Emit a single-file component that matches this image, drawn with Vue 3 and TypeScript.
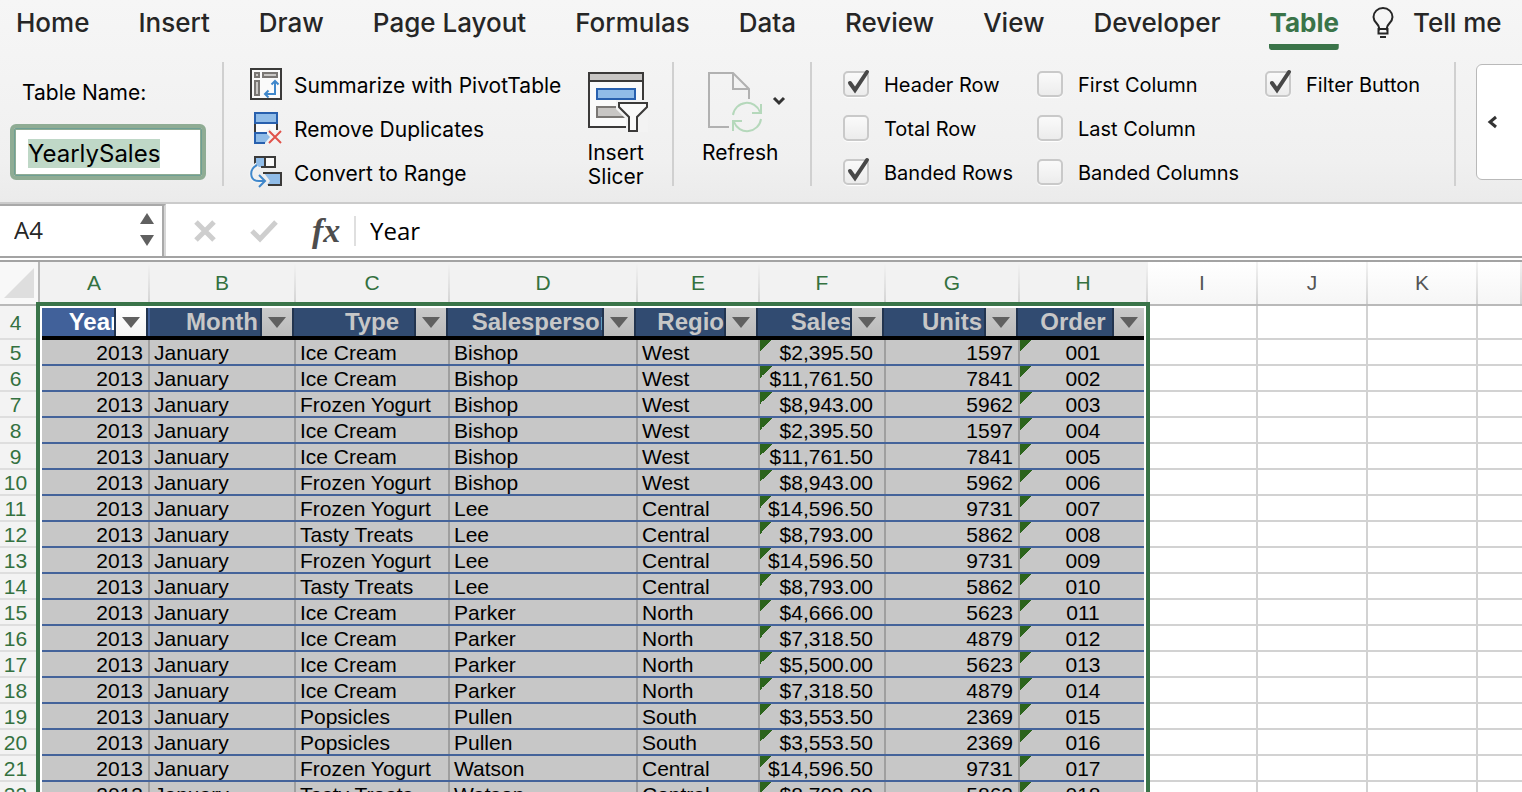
<script setup lang="ts">
import { onMounted, reactive, ref } from 'vue'

interface Column {
  letter: string
  title: string
  width: number
  align: 'left' | 'right' | 'center' | 'money'
  flagged?: boolean
}

const tabs = ['Home', 'Insert', 'Draw', 'Page Layout', 'Formulas', 'Data', 'Review', 'View', 'Developer', 'Table']
const activeTab = ref('Table')

const tableName = ref('YearlySales')
const nameInput = ref<HTMLInputElement | null>(null)
const cellRef = ref('A4')
const formula = ref('Year')

const options = reactive([
  { label: 'Header Row', on: true },
  { label: 'Total Row', on: false },
  { label: 'Banded Rows', on: true },
  { label: 'First Column', on: false },
  { label: 'Last Column', on: false },
  { label: 'Banded Columns', on: false },
  { label: 'Filter Button', on: true },
])

const columns: Column[] = [
  { letter: 'A', title: 'Year', width: 110, align: 'right' },
  { letter: 'B', title: 'Month', width: 146, align: 'left' },
  { letter: 'C', title: 'Type', width: 154, align: 'left' },
  { letter: 'D', title: 'Salesperson', width: 188, align: 'left' },
  { letter: 'E', title: 'Region', width: 122, align: 'left' },
  { letter: 'F', title: 'Sales', width: 126, align: 'money', flagged: true },
  { letter: 'G', title: 'Units', width: 134, align: 'right' },
  { letter: 'H', title: 'Order #', width: 128, align: 'center', flagged: true },
]
const spare = ['I', 'J', 'K', '']

const sales: [string, string, string, string, string][] = [
  ['Ice Cream', 'Bishop', 'West', '$2,395.50', '1597'],
  ['Ice Cream', 'Bishop', 'West', '$11,761.50', '7841'],
  ['Frozen Yogurt', 'Bishop', 'West', '$8,943.00', '5962'],
  ['Ice Cream', 'Bishop', 'West', '$2,395.50', '1597'],
  ['Ice Cream', 'Bishop', 'West', '$11,761.50', '7841'],
  ['Frozen Yogurt', 'Bishop', 'West', '$8,943.00', '5962'],
  ['Frozen Yogurt', 'Lee', 'Central', '$14,596.50', '9731'],
  ['Tasty Treats', 'Lee', 'Central', '$8,793.00', '5862'],
  ['Frozen Yogurt', 'Lee', 'Central', '$14,596.50', '9731'],
  ['Tasty Treats', 'Lee', 'Central', '$8,793.00', '5862'],
  ['Ice Cream', 'Parker', 'North', '$4,666.00', '5623'],
  ['Ice Cream', 'Parker', 'North', '$7,318.50', '4879'],
  ['Ice Cream', 'Parker', 'North', '$5,500.00', '5623'],
  ['Ice Cream', 'Parker', 'North', '$7,318.50', '4879'],
  ['Popsicles', 'Pullen', 'South', '$3,553.50', '2369'],
  ['Popsicles', 'Pullen', 'South', '$3,553.50', '2369'],
  ['Frozen Yogurt', 'Watson', 'Central', '$14,596.50', '9731'],
  ['Tasty Treats', 'Watson', 'Central', '$8,793.00', '5862'],
]
const rows = sales.map((s, i) => ({
  number: i + 5,
  cells: ['2013', 'January', ...s, String(i + 1).padStart(3, '0')],
}))

onMounted(() => {
  nameInput.value?.focus()
  nameInput.value?.select()
})
</script>

<template>
  <div class="app">
    <header class="ribbon">
      <nav class="tabs">
        <button
          v-for="tab in tabs"
          :key="tab"
          type="button"
          class="tab"
          :class="{ active: tab === activeTab }"
          @click="activeTab = tab"
        >{{ tab }}</button>
        <button type="button" class="tab tell">
          <svg width="22" height="32" viewBox="0 0 22 32" fill="none" stroke="#262626" stroke-width="2">
            <path d="M7 23.500V20.500C7 17 1.500 15.500 1.500 10A9.500 9 0 0 1 20.500 10C20.500 15.500 15 17 15 20.500V23.500" />
            <path d="M6.500 22H15.500V26.500H6.500ZM8 30H14" />
          </svg>
          <span>Tell me</span>
        </button>
      </nav>

      <div class="tools">
        <div class="group naming">
          <label for="table-name">Table Name:</label>
          <input id="table-name" ref="nameInput" v-model="tableName" type="text" spellcheck="false">
        </div>

        <div class="group actions">
          <div class="stack">
            <button type="button" class="row-button">
              <svg width="32" height="32" viewBox="0 0 32 32" fill="none" stroke-width="2">
                <rect x="1" y="1" width="30" height="30" fill="#fafafa" stroke="#3b3a39" />
                <g fill="#c9c7c5" stroke="#7a7774">
                  <rect x="5" y="5" width="4" height="4" /><rect x="13" y="5" width="14" height="4" /><rect x="5" y="13" width="4" height="14" />
                </g>
                <path d="M25 13V26H15M21.500 16.500L25 13L28.500 16.500M18.500 22.500L15 26L18.500 29.500" stroke="#3f87cb" />
              </svg>
              <span>Summarize with PivotTable</span>
            </button>
            <button type="button" class="row-button">
              <svg width="32" height="32" viewBox="0 0 32 32" fill="none" stroke-width="2">
                <path d="M5 12V20M27 12V18" stroke="#3b3a39" />
                <path d="M6 12H26V20H6Z" fill="#fafafa" />
                <rect x="5" y="1" width="22" height="10" fill="#90bce8" stroke="#2860ae" />
                <path d="M15 31H5V21H16L20 25Z" fill="#90bce8" />
                <path d="M15 31H5V21H17" stroke="#2860ae" />
                <path d="M16 19L19 16L25 21L27 18H32V32H16L21 25Z" fill="#f2f2f2" />
                <path d="M19 19L31 31M31 19L19 31" stroke="#e0524a" />
              </svg>
              <span>Remove Duplicates</span>
            </button>
            <button type="button" class="row-button">
              <svg width="32" height="32" viewBox="0 0 32 32" fill="none" stroke-width="2">
                <rect x="5" y="1" width="20" height="10" fill="#fafafa" />
                <path d="M5 1H15V11H9L5 8Z" fill="#90bce8" />
                <path d="M5 8V1H25V11H11M15 1V11" stroke="#3b3a39" />
                <path d="M14 17H31V29H17L20 25Z" fill="#90bce8" />
                <path d="M13 17H31V29H18" stroke="#3b3a39" />
                <path d="M7 9C-1 13 -1 25 9 25H15" stroke="#f2f2f2" stroke-width="5" />
                <path d="M7 9C-1 13 -1 25 9 25H15M9 19L15 25L9 31" stroke="#3f87cb" />
              </svg>
              <span>Convert to Range</span>
            </button>
          </div>
          <button type="button" class="big-button">
            <svg width="56" height="60" viewBox="0 0 56 60" fill="none" stroke-width="2">
              <rect x="1" y="1" width="54" height="54" fill="#fafafa" stroke="#3b3a39" />
              <rect x="1" y="1" width="54" height="8" fill="#c8c6c4" stroke="#3b3a39" />
              <rect x="9" y="17" width="38" height="10" fill="#90bce8" stroke="#2860ae" />
              <rect x="9" y="35" width="30" height="10" fill="#c8c6c4" stroke="#7a7774" />
              <path d="M28 28H60V60H38V47L28 37Z" fill="#f3f3f3" />
              <path d="M31 31H59V35L49 45V59H41V45L31 35Z" fill="#fafafa" stroke="#3b3a39" />
            </svg>
            <span>Insert<br>Slicer</span>
          </button>
        </div>

        <div class="group refreshing">
          <button type="button" class="big-button">
            <svg width="64" height="60" viewBox="0 0 64 60" fill="none" stroke-width="2">
              <path d="M21 55H1V1H25L41 17V27" stroke="#b1b1b1" />
              <path d="M25 1V17H41" stroke="#b1b1b1" />
              <g stroke="#b5d8bb">
                <path d="M25 43A14 14 0 0 1 52 40M53 47A14 14 0 0 1 26 50" />
                <path d="M53 32V41H44M25 59V49H34" />
              </g>
            </svg>
            <span>Refresh</span>
          </button>
          <button type="button" class="more" aria-label="Refresh options">
            <svg width="14" height="10" viewBox="0 0 14 10" fill="none" stroke="#333" stroke-width="3"><path d="M2 2L7 7L12 2" /></svg>
          </button>
        </div>

        <div class="group options">
          <label v-for="option in options" :key="option.label" class="option">
            <span class="box">
              <input v-model="option.on" type="checkbox">
              <svg v-if="option.on" width="26" height="26" viewBox="0 0 26 26" fill="none" stroke="#484848" stroke-width="4" stroke-linecap="round">
                <path d="M7 12L12 19L24 1" />
              </svg>
            </span>
            <span class="caption">{{ option.label }}</span>
          </label>
        </div>

        <div class="group gallery">
          <button type="button" aria-label="Previous styles">
            <svg width="10" height="14" viewBox="0 0 10 14" fill="none" stroke="#333" stroke-width="3"><path d="M9 2L3 7L9 12" /></svg>
          </button>
        </div>
      </div>
    </header>

    <section class="formula-bar">
      <div class="name-box">
        <input v-model="cellRef" type="text" aria-label="Name box">
        <div class="spinner">
          <button type="button" aria-label="Previous"><svg width="14" height="11" viewBox="0 0 14 11" fill="#606060"><path d="M0 11L7 0L14 11Z" /></svg></button>
          <button type="button" aria-label="Next"><svg width="14" height="11" viewBox="0 0 14 11" fill="#606060"><path d="M0 0L7 11L14 0Z" /></svg></button>
        </div>
      </div>
      <div class="formula-tools">
        <button type="button" aria-label="Cancel">
          <svg width="22" height="22" viewBox="0 0 22 22" stroke="#cecece" stroke-width="5"><path d="M2 2L20 20M20 2L2 20" /></svg>
        </button>
        <button type="button" aria-label="Enter">
          <svg width="28" height="22" viewBox="0 0 28 22" fill="none" stroke="#cecece" stroke-width="5"><path d="M2 11L10 19L26 2" /></svg>
        </button>
        <button type="button" class="fx" aria-label="Insert function">fx</button>
      </div>
      <input v-model="formula" class="formula" type="text" aria-label="Formula">
    </section>

    <main class="sheet">
      <table>
        <colgroup>
          <col class="gutter">
          <col v-for="c in columns" :key="c.letter" :style="{ width: c.width + 'px' }">
          <col class="plain"><col class="plain"><col class="plain"><col>
        </colgroup>
        <thead>
          <tr class="letters">
            <th class="corner"><svg width="30" height="30" viewBox="0 0 30 30"><path d="M30 0V30H0Z" fill="#dedede" /></svg></th>
            <th v-for="c in columns" :key="c.letter" class="picked">{{ c.letter }}</th>
            <th v-for="s in spare" :key="s">{{ s }}</th>
          </tr>
        </thead>
        <tbody>
          <tr class="titles">
            <th class="number">4</th>
            <th v-for="(c, i) in columns" :key="c.letter" class="title" :class="{ current: i === 0 }">
              {{ c.title }}
              <button type="button" :aria-label="'Filter ' + c.title">
                <svg width="18" height="11" viewBox="0 0 18 11"><path d="M0 0H18L9 11Z" fill="#606060" /></svg>
              </button>
            </th>
            <td v-for="s in spare" :key="s" class="blank"></td>
          </tr>
          <tr v-for="row in rows" :key="row.number">
            <th class="number">{{ row.number }}</th>
            <td
              v-for="(cell, i) in row.cells"
              :key="i"
              class="cell"
              :class="[columns[i].align, { flagged: columns[i].flagged }]"
            >{{ cell }}</td>
            <td v-for="s in spare" :key="s" class="blank"></td>
          </tr>
        </tbody>
      </table>
      <div class="selection"></div>
    </main>
  </div>
</template>

<style>
body {
  overflow: hidden;
}
</style>

<style scoped>
.app {
  height: 100vh;
  overflow: hidden;
  display: flex;
  flex-direction: column;
  background: #fff;
  color: #000;
  font-family: Inter, "Liberation Sans", sans-serif;
  font-size: 21px;
}
* {
  box-sizing: border-box;
}
button,
input {
  margin: 0;
  padding: 0;
  border: 0;
  background: none;
  color: inherit;
  font: inherit;
  outline: none;
}
svg {
  display: block;
  flex: none;
  overflow: visible;
}
.ribbon {
  flex: none;
  background: linear-gradient(#f6f6f6, #f0f0f0 80%, #ebebeb);
  border-bottom: 2px solid #cbcbcb;
}
.tabs {
  display: flex;
  gap: 49px;
  height: 50px;
  padding-left: 16px;
}
.tab {
  flex: none;
  height: 50px;
  padding-bottom: 4px;
  font-size: 26px;
  font-weight: 500;
  line-height: 40px;
  color: #262626;
  white-space: nowrap;
}
.tab.active {
  color: #3a7449;
  font-weight: 700;
  background: linear-gradient(#3a7449, #3a7449) bottom / 100% 6px no-repeat;
  border-radius: 3px;
}
.tell {
  display: flex;
  align-items: center;
  gap: 19px;
  margin-left: -16px;
}
.tools {
  display: flex;
  padding: 12px 0 16px;
}
.group {
  flex: none;
  height: 124px;
  border-right: 2px solid #d0d0d0;
}
.naming {
  width: 224px;
  padding: 18px 16px 0 10px;
}
.naming label {
  display: block;
  padding-left: 12px;
  line-height: 26px;
}
.naming input {
  display: block;
  width: 196px;
  height: 56px;
  margin-top: 18px;
  padding: 2px 14px 0;
  border: 4px solid #8fac94;
  border-radius: 6px;
  background: #fff;
  box-shadow: inset 0 0 0 1px #6f9f94, inset 0 0 0 2px #8fac94;
  font-size: 24px;
}
.naming input::selection {
  background: #bfd8c7;
  color: #000;
}
.actions {
  display: flex;
  width: 450px;
  padding: 6px 28px 0 26px;
  justify-content: space-between;
}
.stack {
  display: flex;
  flex-direction: column;
  gap: 12px;
}
.row-button {
  display: flex;
  align-items: center;
  gap: 12px;
  height: 32px;
  white-space: nowrap;
}
.row-button span,
.caption {
  padding-top: 2px;
}
.big-button {
  display: flex;
  flex-direction: column;
  align-items: center;
  justify-content: flex-start;
  gap: 9px;
  padding-top: 4px;
  line-height: 24px;
}
.refreshing {
  display: flex;
  width: 138px;
  padding: 6px 0 0 28px;
}
.more {
  height: 66px;
  margin-left: -7px;
}
.options {
  display: grid;
  grid-template-rows: repeat(3, 26px);
  grid-template-columns: 194px 228px auto;
  grid-auto-flow: column;
  row-gap: 18px;
  width: 644px;
  padding: 9px 0 0 31px;
  font-size: 20px;
}
.option {
  display: flex;
  align-items: center;
  gap: 15px;
  white-space: nowrap;
}
.box {
  position: relative;
  width: 26px;
  height: 26px;
}
.box input {
  display: block;
  appearance: none;
  width: 26px;
  height: 26px;
  border: 2px solid #c9c9c9;
  border-radius: 5px;
  background: linear-gradient(#fafafa, #ececec);
  box-shadow: 0 1px 1px #fff;
}
.box svg {
  position: absolute;
  top: 0;
  left: 0;
  pointer-events: none;
}
.gallery {
  flex: 1;
  padding: 2px 0 0 20px;
  border: 0;
  overflow: hidden;
}
.gallery button {
  display: flex;
  align-items: center;
  width: 120px;
  height: 116px;
  padding-left: 10px;
  border: 1px solid #b9b9b9;
  border-radius: 6px;
  background: #fff;
}
.formula-bar {
  flex: none;
  display: flex;
  height: 58px;
  border-bottom: 6px double #a3a3a3;
  font-family: "Open Sans", "Noto Sans", sans-serif;
  font-size: 24px;
}
.name-box {
  display: flex;
  width: 166px;
  align-items: center;
  justify-content: space-between;
  padding: 0 10px 4px 14px;
  border-top: 2px solid #a9a9a9;
  border-right: 2px solid #d6d6d6;
  box-shadow: inset -2px 0 #a9a9a9;
}
.name-box input {
  width: 100px;
  color: #262626;
}
.spinner {
  display: grid;
  gap: 11px;
}
.formula-tools {
  display: flex;
  align-items: center;
  gap: 34px;
  width: 188px;
  padding: 2px 0 0 28px;
}
.fx {
  color: #4d4d4d;
  font: italic 700 34px/30px "Liberation Serif", serif;
}
.formula {
  flex: 1;
  height: 30px;
  margin-top: 12px;
  padding-left: 14px;
  border-left: 2px solid #dfdfdf;
  line-height: 30px;
}
.sheet {
  position: relative;
  flex: 1;
  min-height: 0;
  overflow: hidden;
  font-family: "Liberation Sans", Arial, sans-serif;
}
table {
  width: 100%;
  table-layout: fixed;
  border-collapse: separate;
  border-spacing: 0;
}
th,
td {
  padding: 0;
  font-weight: 400;
  white-space: nowrap;
}
.gutter {
  width: 40px;
}
.plain {
  width: 110px;
}
.letters th {
  height: 44px;
  padding-right: 2px;
  border-bottom: 2px solid #b9b9b9;
  background: linear-gradient(#f3f3f3, #d3d3d3) right / 2px 100% no-repeat, linear-gradient(#fff, #f6f6f6);
  color: #555;
}
.letters .picked {
  background: linear-gradient(#f3f3f3, #d3d3d3) right / 2px 100% no-repeat, #f2f2f2;
  color: #34713f;
}
.letters .corner {
  padding: 4px;
  border-right: 2px solid #b9b9b9;
  background: #f8f8f8;
}
.number {
  height: 26px;
  padding: 2px 9px 0 0;
  border-bottom: 2px solid #dedede;
  background: #f3f3f3;
  color: #34713f;
  line-height: 22px;
  text-align: center;
}
.titles th,
.titles td {
  height: 34px;
}
.title {
  position: relative;
  overflow: hidden;
  padding: 2px 2px 0 0;
  border-bottom: 4px solid #000;
  background: #314b71;
  color: #c7c7c7;
  font-size: 24px;
  font-weight: 700;
  line-height: 28px;
  text-align: center;
}
.title button {
  position: absolute;
  top: 2px;
  right: 4px;
  bottom: 0;
  display: grid;
  place-items: center;
  width: 30px;
  background: linear-gradient(#cacaca, #bbb);
  box-shadow: 0 0 0 2px #22344f;
}
.title.current {
  background: #41619a;
  color: #fff;
}
.title.current button {
  background: linear-gradient(#fff, #f4f4f4);
}
.cell {
  height: 26px;
  padding: 2px 7px 0 4px;
  border-bottom: 2px solid #44639a;
  background: linear-gradient(#9f9f9f, #9f9f9f) right / 2px 100% no-repeat, #c7c7c7;
  line-height: 22px;
}
.right,
.money {
  text-align: right;
}
.money {
  padding-left: 0;
  padding-right: 13px;
}
.center {
  padding-right: 6px;
  text-align: center;
}
.flagged {
  background: linear-gradient(135deg, #2c641c 50%, transparent 50%) left top / 12px 12px no-repeat,
    linear-gradient(#9f9f9f, #9f9f9f) right / 2px 100% no-repeat, #c7c7c7;
}
.blank {
  border-right: 2px solid #d2d2d2;
  border-bottom: 2px solid #d2d2d2;
}
.blank:last-child,
.letters th:last-child {
  border-right: 0;
}
.selection {
  position: absolute;
  top: 40px;
  left: 36px;
  bottom: -10px;
  width: 1114px;
  border: 4px solid #3a7449;
  box-shadow: inset 0 0 0 2px #fff;
  pointer-events: none;
}
</style>
